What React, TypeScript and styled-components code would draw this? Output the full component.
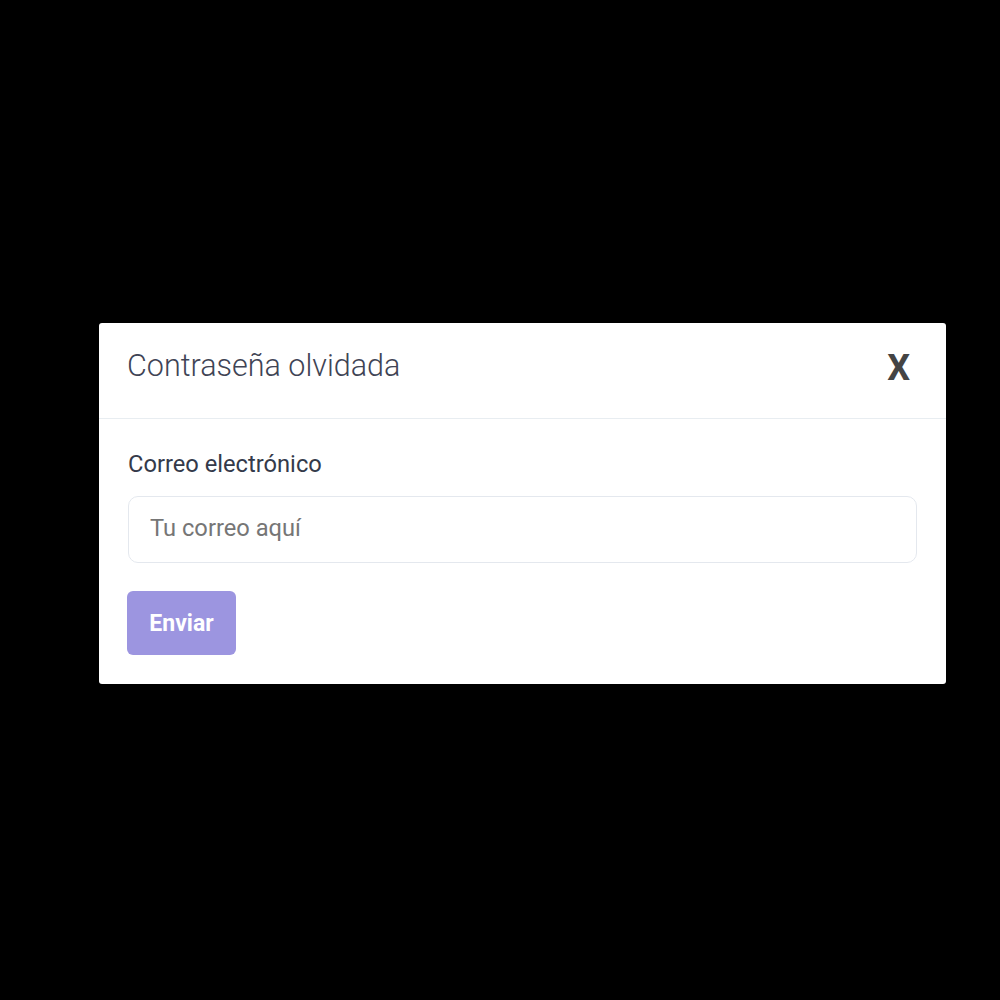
import React from "react";
import styled, { createGlobalStyle } from "styled-components";

const GlobalStyle = createGlobalStyle`
  html, body {
    margin: 0;
    padding: 0;
    background: #000000;
    font-family: Roboto, "Noto Sans", Arial, sans-serif;
  }
  * { box-sizing: border-box; }
`;

const Backdrop = styled.div`
  width: 1000px;
  height: 1000px;
  background: #000000;
  padding: 323px 0 0 99px;
`;

const Modal = styled.div`
  width: 847px;
  height: 361px;
  background: #ffffff;
  border-radius: 3px;
  display: flex;
  flex-direction: column;
  overflow: hidden;
`;

const Header = styled.div`
  height: 96px;
  padding: 0 36px 10px 28px;
  display: flex;
  align-items: center;
  justify-content: space-between;
  border-bottom: 1px solid #e8edf1;
`;

const Title = styled.h2`
  margin: 0;
  font-family: Roboto, sans-serif;
  font-weight: 300;
  font-size: 30.5px;
  line-height: 36px;
  color: #3f4455;
`;

const CloseButton = styled.button`
  border: none;
  background: none;
  padding: 0;
  margin-top: 4px;
  font-family: Roboto, sans-serif;
  font-weight: 700;
  font-size: 36px;
  line-height: 42px;
  color: #444444;
  cursor: pointer;
`;

const Body = styled.form`
  padding: 30px 29px 29px 29px;
  display: flex;
  flex-direction: column;
  align-items: flex-start;
`;

const Label = styled.label`
  font-family: Roboto, sans-serif;
  font-size: 23.7px;
  line-height: 30px;
  color: #343a4a;
  margin-bottom: 17px;
`;

const Input = styled.input`
  width: 789px;
  height: 67px;
  border: 1px solid #e4e8ee;
  border-radius: 10px;
  padding: 0 21px 3px 21px;
  font-family: Roboto, sans-serif;
  font-size: 23.7px;
  color: #333;
  outline: none;
  &::placeholder {
    color: #767676;
  }
`;

const SubmitButton = styled.button`
  margin-top: 28px;
  margin-left: -1px;
  width: 109px;
  height: 64px;
  border: none;
  border-radius: 6px;
  background: #9c95e0;
  color: #ffffff;
  font-family: Roboto, sans-serif;
  font-weight: 700;
  font-size: 23px;
  cursor: pointer;
`;

export default function App() {
  return (
    <>
      <GlobalStyle />
      <Backdrop>
        <Modal>
          <Header>
            <Title>Contraseña olvidada</Title>
            <CloseButton type="button">X</CloseButton>
          </Header>
          <Body onSubmit={(e) => e.preventDefault()}>
            <Label htmlFor="email">Correo electrónico</Label>
            <Input id="email" type="email" placeholder="Tu correo aquí" />
            <SubmitButton type="submit">Enviar</SubmitButton>
          </Body>
        </Modal>
      </Backdrop>
    </>
  );
}
